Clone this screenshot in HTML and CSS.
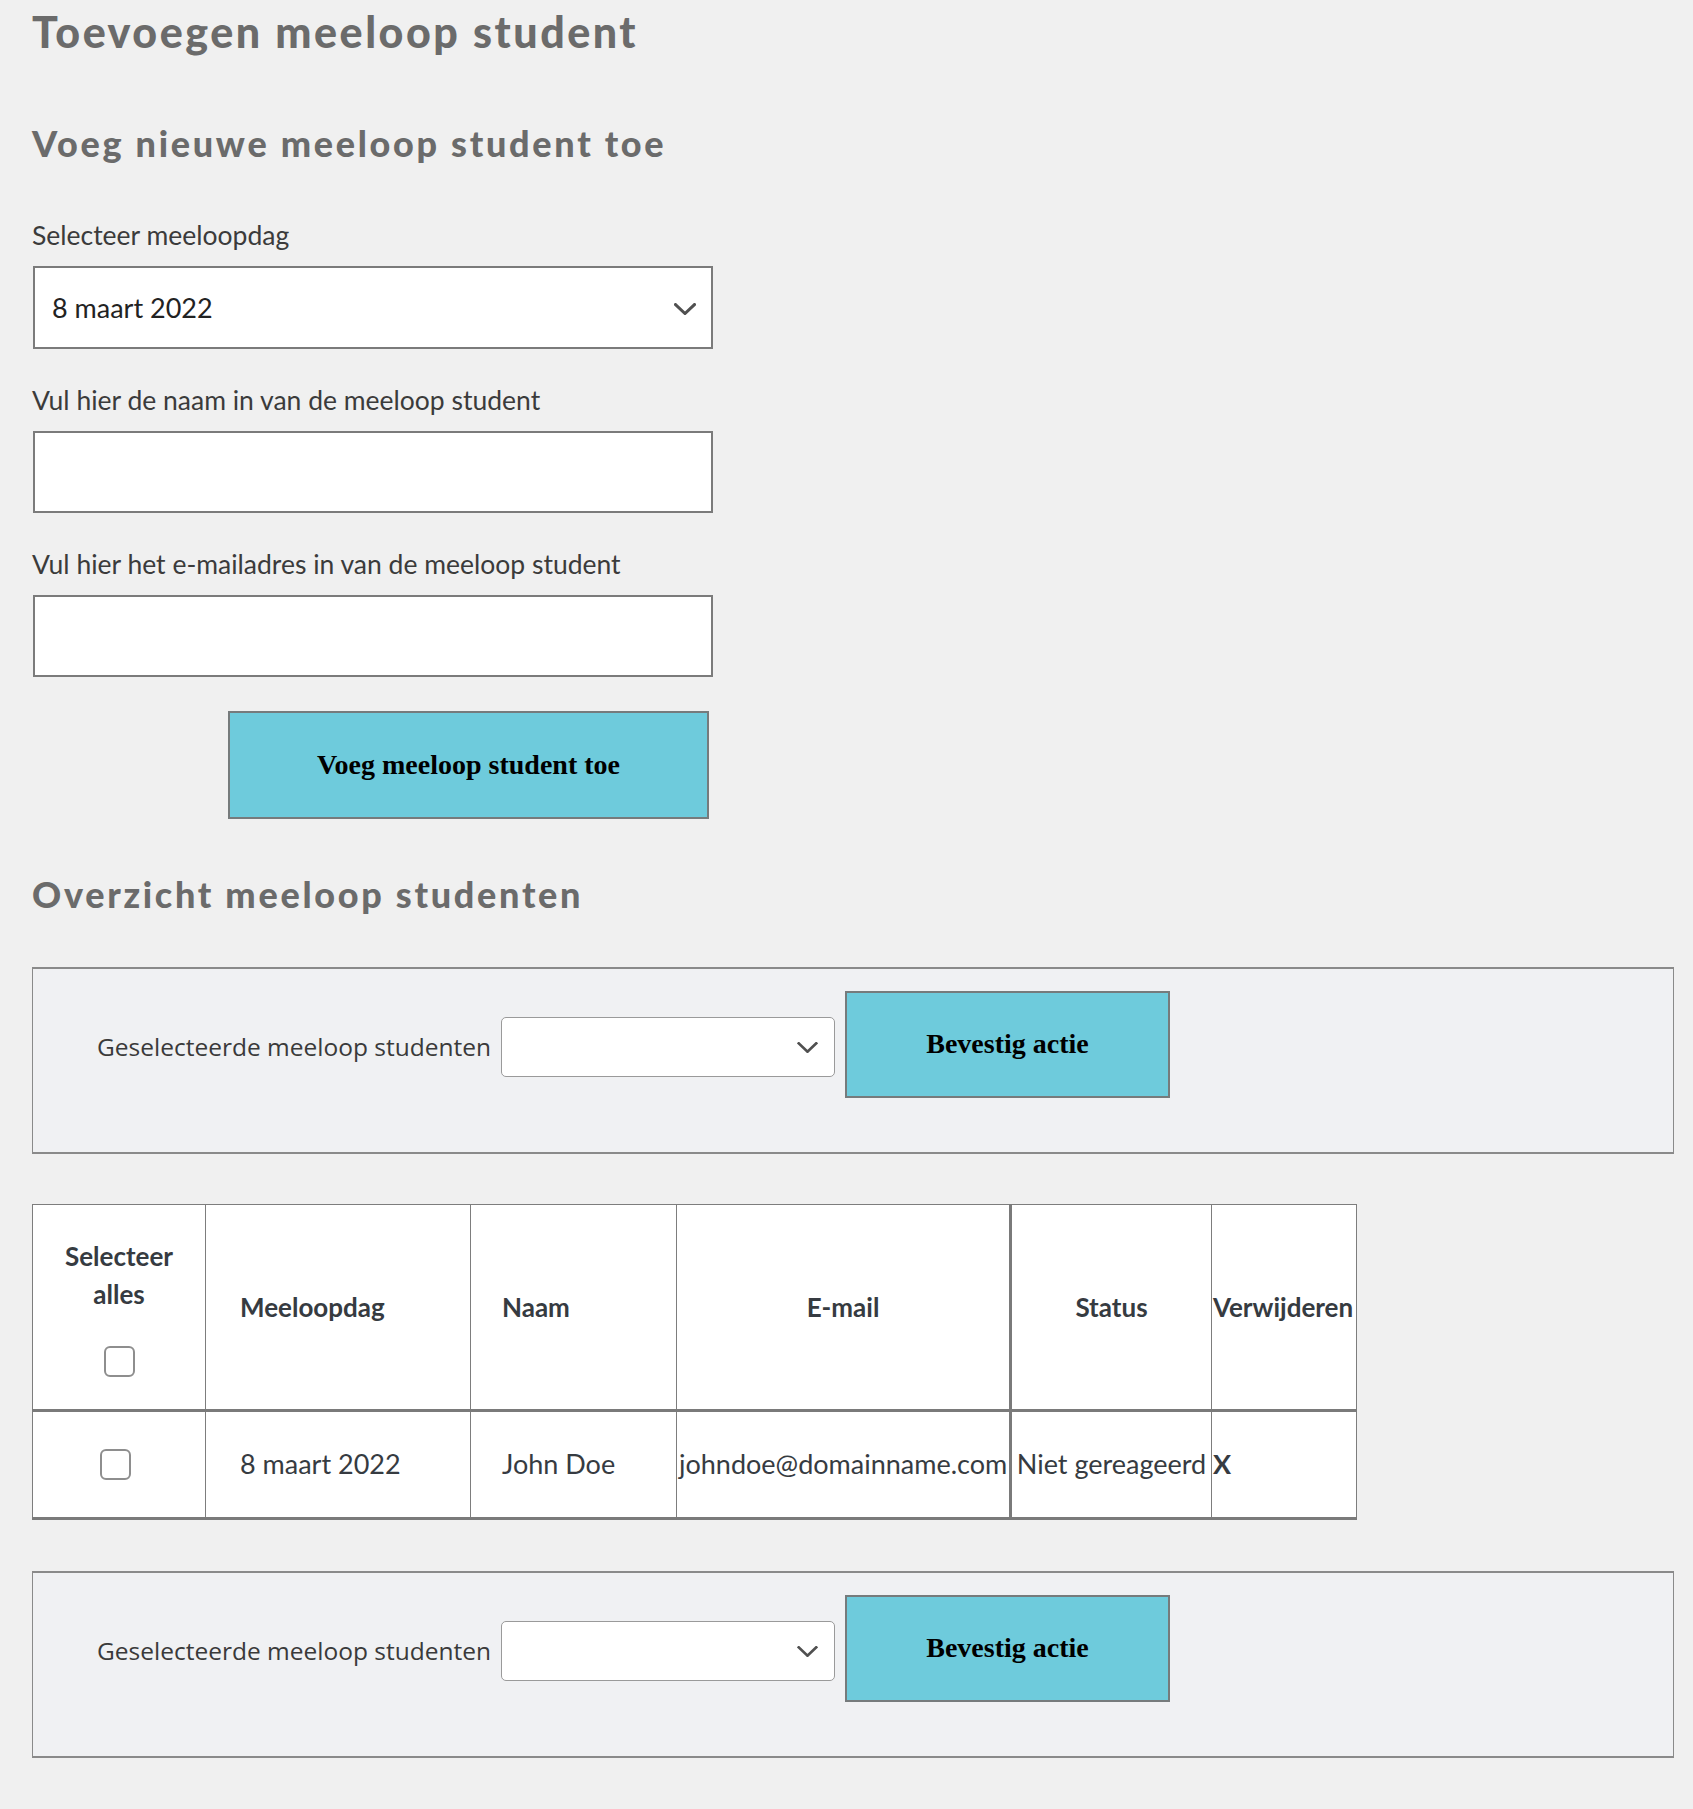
FILE: index.html
```html
<!DOCTYPE html>
<html lang="nl">
<head>
<meta charset="utf-8">
<title>Toevoegen meeloop student</title>
<link rel="stylesheet" href="styles.css">
</head>
<body>
<main class="page">
  <h1 class="title">Toevoegen meeloop student</h1>
  <h2 class="subtitle">Voeg nieuwe meeloop student toe</h2>

  <form class="add-form">
    <label class="field-label" for="dag">Selecteer meeloopdag</label>
    <div class="select-wrap">
      <select id="dag" class="big-select"><option>8 maart 2022</option></select>
      <svg class="chevron big-chevron" viewBox="0 0 22 12" width="22" height="12"><polyline points="1.5,1.5 11,10.5 20.5,1.5"/></svg>
    </div>

    <label class="field-label spaced" for="naam">Vul hier de naam in van de meeloop student</label>
    <input id="naam" class="text-input" type="text">

    <label class="field-label spaced" for="mail">Vul hier het e-mailadres in van de meeloop student</label>
    <input id="mail" class="text-input" type="email">

    <button type="button" class="btn add-btn">Voeg meeloop student toe</button>
  </form>

  <h2 class="subtitle overview">Overzicht meeloop studenten</h2>

  <div class="action-box">
    <label class="action-label">Geselecteerde meeloop studenten</label>
    <div class="select-wrap small">
      <select class="small-select"><option></option></select>
      <svg class="chevron small-chevron" viewBox="0 0 22 12" width="21" height="11"><polyline points="1.5,1.5 11,10.5 20.5,1.5"/></svg>
    </div>
    <button type="button" class="btn action-btn">Bevestig actie</button>
  </div>

  <table class="students">
    <colgroup>
      <col class="c-select">
      <col class="c-day">
      <col class="c-name">
      <col class="c-mail">
      <col class="c-status">
      <col class="c-del">
    </colgroup>
    <thead>
      <tr>
        <th class="th-select"><span>Selecteer<br>alles</span><input type="checkbox" class="check head-check"></th>
        <th class="left-cell day-cell">Meeloopdag</th>
        <th class="left-cell name-cell">Naam</th>
        <th class="mail-cell">E-mail</th>
        <th>Status</th>
        <th class="del-cell">Verwijderen</th>
      </tr>
    </thead>
    <tbody>
      <tr>
        <td class="td-select"><input type="checkbox" class="check"></td>
        <td class="left-cell day-cell">8 maart 2022</td>
        <td class="left-cell name-cell">John Doe</td>
        <td class="mail-cell">johndoe@domainname.com</td>
        <td class="status-cell">Niet gereageerd</td>
        <td class="del-cell del-x">X</td>
      </tr>
    </tbody>
  </table>

  <div class="action-box">
    <label class="action-label">Geselecteerde meeloop studenten</label>
    <div class="select-wrap small">
      <select class="small-select"><option></option></select>
      <svg class="chevron small-chevron" viewBox="0 0 22 12" width="21" height="11"><polyline points="1.5,1.5 11,10.5 20.5,1.5"/></svg>
    </div>
    <button type="button" class="btn action-btn">Bevestig actie</button>
  </div>
</main>
</body>
</html>
```

FILE: styles.css
```css
* {
  box-sizing: border-box;
}

body {
  margin: 0;
  background: #f0f0f0;
  font-family: Lato, "Noto Sans", sans-serif;
  color: #3c3c3c;
}

.page {
  padding: 0 19px 51px 32px;
}

.title {
  margin: 0;
  padding-top: 6px;
  font-size: 43px;
  line-height: 1.2;
  font-weight: 900;
  color: #6b6b6b;
  letter-spacing: 2.5px;
}

.subtitle {
  margin: 64px 0 0;
  font-size: 36px;
  line-height: 1.2;
  font-weight: 900;
  color: #6b6b6b;
  letter-spacing: 2.7px;
}

.add-form {
  display: flex;
  flex-direction: column;
  width: 681px;
  margin-top: 55px;
}

.field-label {
  display: block;
  margin: 0 0 16px;
  font-size: 26.5px;
  line-height: 30px;
  color: #3b3b3b;
}

.field-label.spaced {
  margin-top: 36px;
}

.select-wrap {
  position: relative;
  margin-left: 1px;
}

.big-select,
.text-input {
  display: block;
  width: 680px;
  height: 83px;
  margin: 0;
  border: 2px solid #7b7b7b;
  border-radius: 0;
  background: #ffffff;
  font-family: Lato, "Noto Sans", sans-serif;
  font-size: 27px;
  color: #222222;
  -webkit-appearance: none;
  appearance: none;
  outline: none;
}

.text-input {
  margin-left: 1px;
  height: 82px;
}

.big-select {
  padding: 0 50px 0 17px;
}

.chevron {
  position: absolute;
  fill: none;
  stroke: #505050;
  stroke-width: 3;
  stroke-linecap: square;
  pointer-events: none;
}

.big-chevron {
  right: 17px;
  top: 37px;
}

.btn {
  background: #6ecbdc;
  border: 2px solid #767b7c;
  border-radius: 0;
  font-family: "Liberation Serif", "Times New Roman", serif;
  font-weight: 700;
  font-size: 28px;
  color: #000000;
  cursor: pointer;
}

.add-btn {
  align-self: flex-end;
  width: 481px;
  height: 108px;
  margin: 34px 4px 0 0;
}

.overview {
  margin-top: 54px;
}

.action-box {
  display: flex;
  align-items: flex-start;
  gap: 10px;
  margin-top: 51px;
  padding: 22px 0 54px 64px;
  background: #f0f1f3;
  border: 1px solid #8a8a8a;
  border-top-width: 2px;
  border-bottom-width: 2px;
}

.action-label {
  margin-top: 26px;
  font-family: "Open Sans", "Noto Sans", sans-serif;
  font-size: 24.5px;
  line-height: 60px;
  color: #3a3a3a;
}

.select-wrap.small {
  margin: 26px 0 0;
}

.small-select {
  display: block;
  width: 334px;
  height: 60px;
  border: 1.5px solid #9a9a9a;
  border-radius: 5px;
  background: #ffffff;
  -webkit-appearance: none;
  appearance: none;
  outline: none;
}

.small-chevron {
  right: 17px;
  top: 25px;
}

.action-btn {
  width: 325px;
  height: 107px;
}

.students {
  margin-top: 50px;
  width: 1324px;
  border-collapse: collapse;
  table-layout: fixed;
  background: #ffffff;
  color: #363b41;
}

.c-select { width: 173px; }
.c-day { width: 265px; }
.c-name { width: 206px; }
.c-mail { width: 334px; }
.c-status { width: 201px; }
.c-del { width: 145px; }

.students th,
.students td {
  border: 1px solid #7d7d7d;
  padding: 0 2px;
  text-align: center;
  vertical-align: middle;
  white-space: nowrap;
}

.students th {
  height: 206px;
  font-size: 26px;
  font-weight: 700;
  line-height: 38px;
  border-bottom: 3px solid #7a7a7a;
}

.students td {
  height: 108px;
  font-size: 27px;
  line-height: 32px;
  border-bottom: 3px solid #7a7a7a;
}

.students .left-cell {
  text-align: left;
}

.students .day-cell {
  padding-left: 34px;
}

.students .name-cell {
  padding-left: 31px;
}

.students .mail-cell {
  border-right: 3px solid #7a7a7a;
}

.students .del-cell {
  text-align: left;
  padding: 0 1px;
}

.students .del-x {
  font-weight: 700;
}

.th-select span {
  display: block;
}

.students .td-select {
  padding-right: 10px;
}

.check {
  display: block;
  width: 31px;
  height: 31px;
  margin: 0 auto;
  border: 2px solid #8e8e8e;
  border-radius: 6px;
  background: #ffffff;
  -webkit-appearance: none;
  appearance: none;
}

.head-check {
  margin-top: 33px;
}
```
